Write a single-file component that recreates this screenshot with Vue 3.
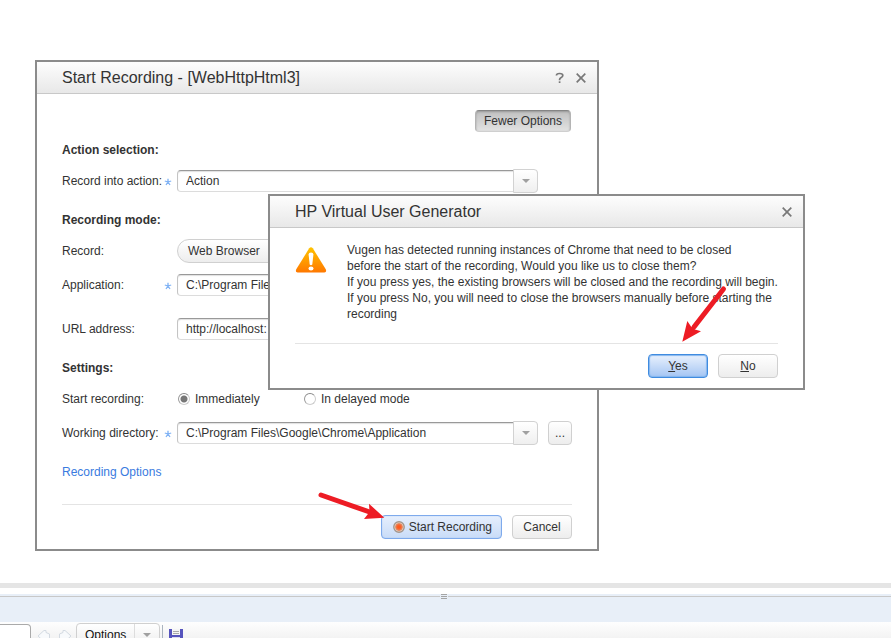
<script setup>
import { ref } from 'vue'

const action = ref('Action')
const application = ref('C:\\Program Files')
const url = ref('http://localhost:')
const start = ref('now')
const directory = ref('C:\\Program Files\\Google\\Chrome\\Application')
const search = ref('')
</script>

<template>
  <div class="desktop">
    <main class="stage">
      <section class="window recording" role="dialog" aria-labelledby="rec-title">
        <header class="titlebar">
          <h1 id="rec-title">Start Recording - [WebHttpHtml3]</h1>
          <button class="icon-btn" type="button" aria-label="Help">
            <svg width="10" height="12" viewBox="0 0 10 12"><path d="M1.4 3.6Q1.4 1.5 4.6 1.5T7.8 3.4Q7.8 4.6 6.2 5.4Q4.6 6.2 4.6 7.6V8.2" /><path d="M4.6 9.3V11" /></svg>
          </button>
          <button class="icon-btn" type="button" aria-label="Close">
            <svg width="12" height="12" viewBox="0 0 12 12"><path d="M1.7 1.7L10.3 10.3M10.3 1.7L1.7 10.3" /></svg>
          </button>
        </header>
        <form class="body" @submit.prevent>
          <button class="btn pressed" type="button">Fewer Options</button>

          <h2 class="first">Action selection:</h2>
          <div class="row">
            <label for="action">Record into action:</label>
            <svg class="star" viewBox="0 0 8 8"><path d="M4 4V.8M4 4L.8 3M4 4L7.2 3M4 4L2 7M4 4L6 7" /></svg>
            <div class="combo">
              <select id="action" v-model="action"><option>Action</option></select>
              <span class="drop"></span>
            </div>
          </div>

          <h2>Recording mode:</h2>
          <div class="row">
            <span class="label">Record:</span>
            <div class="segments"><button class="btn pill" type="button">Web Browser</button></div>
          </div>
          <div class="row next">
            <label for="application">Application:</label>
            <svg class="star" viewBox="0 0 8 8"><path d="M4 4V.8M4 4L.8 3M4 4L7.2 3M4 4L2 7M4 4L6 7" /></svg>
            <input id="application" v-model="application" class="text" type="text" />
          </div>
          <div class="row apart">
            <label for="url">URL address:</label>
            <input id="url" v-model="url" class="text" type="text" />
          </div>

          <h2>Settings:</h2>
          <div class="row">
            <span class="label">Start recording:</span>
            <div class="radios">
              <label><input v-model="start" type="radio" name="start" value="now" />Immediately</label>
              <label><input v-model="start" type="radio" name="start" value="delayed" />In delayed mode</label>
            </div>
          </div>
          <div class="row next">
            <label for="directory">Working directory:</label>
            <svg class="star" viewBox="0 0 8 8"><path d="M4 4V.8M4 4L.8 3M4 4L7.2 3M4 4L2 7M4 4L6 7" /></svg>
            <div class="combo">
              <select id="directory" v-model="directory"><option>C:\Program Files\Google\Chrome\Application</option></select>
              <span class="drop"></span>
            </div>
            <button class="btn browse" type="button">...</button>
          </div>

          <a class="link" href="#">Recording Options</a>
          <footer class="actions">
            <button class="btn primary record" type="submit">
              <svg width="12" height="12" viewBox="0 0 12 12">
                <circle cx="6" cy="6" r="5.2" fill="#f3d9c8" stroke="#a3958b" stroke-width="1.4" />
                <circle cx="6" cy="6" r="3.4" fill="#fa6a35" stroke="#dd8b66" stroke-width="1" />
                <circle cx="6" cy="6" r="1.8" fill="#ff5a1c" />
              </svg>
              Start Recording
            </button>
            <button class="btn wide" type="button">Cancel</button>
          </footer>
        </form>
      </section>

      <section class="window prompt" role="alertdialog" aria-labelledby="msg-title">
        <header class="titlebar">
          <h1 id="msg-title">HP Virtual User Generator</h1>
          <button class="icon-btn" type="button" aria-label="Close">
            <svg width="12" height="12" viewBox="0 0 12 12"><path d="M1.7 1.7L10.3 10.3M10.3 1.7L1.7 10.3" /></svg>
          </button>
        </header>
        <div class="message">
          <svg class="warning" width="32" height="27" viewBox="0 0 32 27">
            <defs>
              <linearGradient id="amber" x1="0" y1="0" x2="0" y2="1">
                <stop offset="0" stop-color="#ffc400" />
                <stop offset="1" stop-color="#ff7800" />
              </linearGradient>
            </defs>
            <path d="M14.2 1.3Q16 -1 17.8 1.3L30.9 22.6Q31.8 25.4 29.4 25.4H2.6Q.2 25.4 1.1 22.6Z" fill="url(#amber)" />
            <path d="M13.6 7.5Q13.6 5.5 16 5.5T18.4 7.5L17.3 17.4Q16 19 14.7 17.4Z" fill="#fff" />
            <ellipse cx="16" cy="21.4" rx="2.5" ry="2" fill="#fff" />
          </svg>
          <p>
            Vugen has detected running instances of Chrome that need to be closed<br />
            before the start of the recording, Would you like us to close them?<br />
            If you press yes, the existing browsers will be closed and the recording will begin.<br />
            If you press No, you will need to close the browsers manually before starting the<br />
            recording
          </p>
        </div>
        <footer class="actions">
          <button class="btn primary focus wide" type="button"><span><u>Y</u>es</span></button>
          <button class="btn wide" type="button"><span><u>N</u>o</span></button>
        </footer>
      </section>

      <svg class="arrow arrow-yes" width="50" height="60" viewBox="0 0 50 60">
        <path d="M44.5 6L15 44" stroke="#ed1c24" stroke-width="5" stroke-linecap="round" />
        <path d="M3.3 58.7L8.3 38L12 43.5L16 46.5L22 48.3Z" fill="#ed1c24" />
      </svg>
      <svg class="arrow arrow-start" width="70" height="32" viewBox="0 0 70 32">
        <path d="M5 5L55 22.5" stroke="#ed1c24" stroke-width="5" stroke-linecap="round" />
        <path d="M68.3 27.7L53 13.7L53.5 22L48 29Z" fill="#ed1c24" />
      </svg>
    </main>

    <div class="strip"></div>
    <div class="splitter"><span class="grip"></span></div>
    <div class="toolbar">
      <input v-model="search" class="search" type="text" aria-label="Search" />
      <button class="nav" type="button" aria-label="Previous">
        <svg width="14" height="14" viewBox="0 0 14 14"><path d="M1 7L7 1.5H9V3.5L12.5 5V11H9L7 12.5Z" /></svg>
      </button>
      <button class="nav" type="button" aria-label="Next">
        <svg width="14" height="14" viewBox="0 0 14 14"><path d="M13 7L7 1.5H5V3.5L1.5 5V11H5L7 12.5Z" /></svg>
      </button>
      <button class="btn options" type="button">Options<span class="chevron"></span></button>
      <span class="divider"></span>
      <button class="nav save" type="button" aria-label="Save">
        <svg width="14" height="14" viewBox="0 0 14 14">
          <path d="M0 0H14V14H2L0 12Z" fill="#5654bd" />
          <rect x="3" y="0" width="8" height="6" fill="#f5f5f5" />
          <path class="lines" d="M4 2.5H10M4 4.5H10" />
          <rect x="3" y="8" width="8" height="6" fill="#dcdcf0" />
          <rect x="4" y="9" width="2" height="5" fill="#35338f" />
        </svg>
      </button>
    </div>
  </div>
</template>

<style>
body {
  margin: 0;
  overflow: hidden;
}
</style>

<style scoped>
* {
  box-sizing: border-box;
}
.desktop {
  display: flex;
  flex-direction: column;
  height: 100vh;
  overflow: hidden;
  background: #fff;
  color: #333;
  font: 12px/16px 'Liberation Sans', Arial, sans-serif;
}
.stage {
  position: relative;
  flex: 1;
  min-height: 0;
}
button, input, select {
  margin: 0;
  font: inherit;
  color: inherit;
}
.window {
  position: absolute;
  background: #fff;
  border: 2px solid #8b8b8b;
}
.recording {
  left: 35px;
  top: 60px;
  width: 564px;
}
.prompt {
  left: 268px;
  top: 194px;
  width: 537px;
}
.titlebar {
  display: flex;
  align-items: center;
  gap: 10px;
  height: 32px;
  padding: 0 10px 0 25px;
  border-bottom: 1px solid #c8c8c8;
  background: linear-gradient(#fdfdfd, #e8e8e8);
}
h1 {
  flex: 1;
  margin: 0;
  font-size: 16px;
  font-weight: 400;
}
.icon-btn {
  display: flex;
  padding: 0;
  border: 0;
  background: none;
}
.icon-btn path {
  fill: none;
  stroke: #787878;
  stroke-width: 1.7;
}
.body {
  display: flex;
  flex-direction: column;
  padding: 16px 25px 10px;
}
h2 {
  margin: 19px 0 11px;
  font-size: 12px;
  line-height: 16px;
  font-weight: 700;
}
h2.first {
  margin-top: 10px;
}
.row {
  display: grid;
  grid-template-columns: 105px 10px 1fr 34px;
  align-items: center;
  height: 24px;
}
.row.next {
  margin-top: 10px;
}
.row.apart {
  margin-top: 20px;
}
.row > label, .label {
  grid-column: 1;
  white-space: nowrap;
}
.star {
  grid-column: 2;
  width: 8px;
  height: 8px;
  margin-top: 1px;
  margin-left: -3px;
  fill: none;
  stroke: #7fb2f5;
  stroke-width: 1.3;
}
.text, .combo, .segments, .radios {
  grid-column: 3;
  width: 100%;
}
.text, select {
  height: 22px;
  padding: 0 8px;
  border: 1px solid #dcdcdc;
  border-top-color: #999;
  border-left-color: #c4c4c4;
  border-radius: 4px;
  background: #fff;
  box-shadow: inset 0 1px 1px #e0e0e0;
  outline: 0;
}
.combo {
  display: grid;
  align-items: center;
}
.combo > * {
  grid-area: 1 / 1;
}
select {
  width: 100%;
  appearance: none;
}
.drop {
  display: flex;
  align-items: center;
  justify-content: center;
  justify-self: end;
  width: 25px;
  height: 24px;
  border: 1px solid #d2d2d2;
  border-radius: 0 4px 4px 0;
  background: linear-gradient(#fff, #efefef);
  pointer-events: none;
}
.drop::after, .chevron::after {
  content: '';
  border: 4px solid transparent;
  border-top-color: #a0a0a0;
  border-bottom: 0;
}
.btn {
  display: inline-flex;
  align-items: center;
  justify-content: center;
  height: 24px;
  padding: 0 11px;
  border: 1px solid #d0d0d0;
  border-radius: 4px;
  background: linear-gradient(#fff, #ededed);
  white-space: nowrap;
}
.pressed {
  align-self: flex-end;
  height: 22px;
  padding: 0 8px;
  margin-right: 1px;
  border-color: #858585 #b4b4b4 #cfcfcf;
  background: linear-gradient(#c0c0c0, #e2e2e2);
  box-shadow: inset 0 1px 2px #999;
}
.pill {
  padding: 0 10px;
  border-radius: 12px 0 0 12px;
}
.segments {
  display: flex;
}
.segments .btn {
  width: 110px;
  justify-content: flex-start;
}
.radios {
  display: grid;
  grid-template-columns: 126px 1fr;
}
.radios label {
  display: flex;
  align-items: center;
  gap: 5px;
}
input[type='radio'] {
  width: 12px;
  height: 12px;
  margin-left: 1px;
  appearance: none;
  border: 1px solid #ccc;
  border-top-color: #888;
  border-left-color: #999;
  border-radius: 50%;
  background: #fff;
}
input[type='radio']:checked {
  background: radial-gradient(circle, #777 3px, #fff 4px);
}
.browse {
  grid-column: 4;
  justify-self: end;
  width: 24px;
  padding: 0;
}
.link {
  align-self: flex-start;
  margin-top: 19px;
  color: #3a7be0;
  text-decoration: none;
}
.actions {
  display: flex;
  justify-content: flex-end;
  gap: 10px;
  padding-top: 10px;
  border-top: 1px solid #e4e4e4;
}
.body .actions {
  margin-top: 24px;
}
.primary {
  border-color: #7eaaec;
  background: linear-gradient(#e6effd, #c9dcf8);
  box-shadow: inset 0 0 1px #7eaaec;
}
.record {
  gap: 4px;
  padding: 0 9px 0 11px;
}
.focus {
  border-color: #3f8be0;
  background: linear-gradient(#e9f1fd, #a4c5f3);
  box-shadow: inset 0 0 1px 1px #83b5ee;
}
.wide {
  width: 60px;
  padding: 0;
}
u {
  text-underline-offset: 1px;
}
.message {
  display: flex;
  gap: 20px;
  padding: 14px 25px 21px;
}
.warning {
  flex: none;
  margin-top: 5px;
}
.message p {
  margin: 0;
  white-space: nowrap;
}
.prompt .actions {
  margin: 0 25px 10px;
}
.arrow {
  position: absolute;
  fill: none;
  pointer-events: none;
}
.arrow-yes {
  left: 679px;
  top: 283px;
}
.arrow-start {
  left: 316px;
  top: 490px;
}
.strip {
  height: 5px;
  margin-bottom: 6px;
  background: #e5e5e5;
}
.splitter {
  display: flex;
  justify-content: center;
  height: 28px;
  padding-right: 3px;
  background: linear-gradient(#c8c8c8, #c8c8c8) 0 2px / 100% 1px no-repeat #e8eff8;
}
.grip {
  width: 8px;
  height: 5px;
  border: 1px solid #e8eff8;
  border-width: 0 1px;
  background: repeating-linear-gradient(#a5a5a5 0 1px, #e8eff8 1px 2px);
}
.toolbar {
  display: flex;
  align-items: flex-start;
  height: 16px;
  padding-top: 1px;
  overflow: hidden;
  background: linear-gradient(#fefefe, #f3f3f3);
  color: #111;
}
.search {
  width: 31px;
  height: 22px;
  margin: 1px 6px 0 0;
  padding: 0;
  border: 1px solid #aaa;
  border-left: 0;
  border-radius: 0 4px 0 0;
  background: #fff;
}
.nav {
  width: 14px;
  margin: 6px 7px 0 0;
  padding: 0;
  border: 0;
  background: none;
}
.nav svg {
  display: block;
}
.nav path {
  fill: #f8fafc;
  stroke: #d3dae2;
}
.nav.save {
  margin: 6px 0 0;
}
.save path {
  fill: #5654bd;
  stroke: none;
}
.save .lines {
  stroke: #aaa;
}
.options {
  width: 84px;
  margin-left: -3px;
  padding: 0 0 0 8px;
  justify-content: space-between;
}
.chevron {
  display: flex;
  align-items: center;
  justify-content: center;
  width: 25px;
  height: 22px;
  border-left: 1px solid #ddd;
}
.divider {
  width: 1px;
  height: 22px;
  margin: 2px 6px 0 2px;
  background: #aab4c0;
}
</style>
